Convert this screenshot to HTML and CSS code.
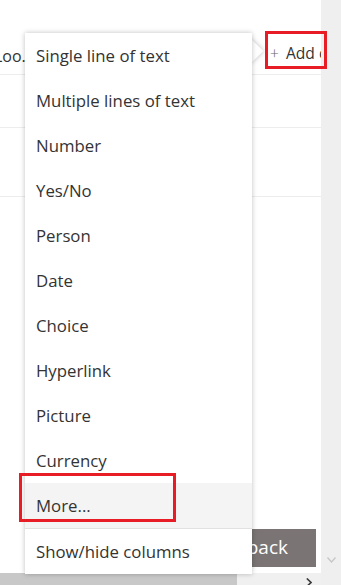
FILE: index.html
```html
<!DOCTYPE html>
<html lang="en">
<head>
    <meta charset="UTF-8">
    <meta name="viewport" content="width=device-width, initial-scale=1.0">
    <title>Add column</title>
    <link rel="stylesheet" href="styles.css">
</head>
<body>
    <div class="page">
        <div class="main">
            <div class="list">
                <div class="row header">
                    <span class="col-name">Loo...</span>
                    <span class="add-col"><span class="plus">+</span> Add c</span>
                </div>
                <div class="row row-2"></div>
                <div class="row row-3"></div>
                <div class="filler"></div>
                <div class="footer">
                    <button class="feedback">Feedback</button>
                </div>
            </div>
            <div class="hscroll">
                <div class="thumb"></div>
                <div class="track">
                    <svg class="arrow-right" width="6" height="9" viewBox="0 0 6 9"><path d="M0.8 0.5 L5 4.5 L0.8 8.5" fill="none" stroke="#3a3a3a" stroke-width="1.6"/></svg>
                </div>
            </div>
        </div>
        <div class="vscroll">
            <svg class="arrow-down" width="9" height="6" viewBox="0 0 9 6"><path d="M0.5 0.5 L4.5 5 L8.5 0.5" fill="none" stroke="#c6c6c6" stroke-width="1.3"/></svg>
        </div>
    </div>

    <!-- column type menu -->
    <div class="menu">
        <div class="beak"></div>
        <ul class="items">
            <li>Single line of text</li>
            <li>Multiple lines of text</li>
            <li>Number</li>
            <li>Yes/No</li>
            <li>Person</li>
            <li>Date</li>
            <li>Choice</li>
            <li>Hyperlink</li>
            <li>Picture</li>
            <li>Currency</li>
            <li class="hover">More...</li>
            <li class="divider"></li>
            <li>Show/hide columns</li>
        </ul>
    </div>

    <!-- annotation boxes -->
    <div class="mark mark-add"></div>
    <div class="mark mark-more"></div>
</body>
</html>
```

FILE: styles.css
```css
* {
    margin: 0;
    padding: 0;
    box-sizing: border-box;
    font-family: "Open Sans", "Noto Sans", sans-serif;
}

body {
    width: 341px;
    height: 585px;
    overflow: hidden;
    background: #fff;
    color: #333;
}

.page {
    display: flex;
    height: 585px;
}

.main {
    width: 321px;
    display: flex;
    flex-direction: column;
}

.list {
    flex: 1;
    display: flex;
    flex-direction: column;
    padding-top: 33px;
}

.row {
    border-bottom: 1px solid #ededed;
}

.header {
    height: 42px;
    display: flex;
    align-items: center;
    justify-content: space-between;
    padding-bottom: 2px;
}

.col-name {
    font-size: 16px;
    margin-left: -6px;
    margin-top: 6px;
    color: #333;
}

.add-col {
    font-size: 15.6px;
    white-space: nowrap;
    width: 51px;
    overflow: hidden;
    color: #333;
}

.plus {
    font-weight: 300;
    color: #666;
    margin-right: 3px;
}

.row-2 {
    height: 53px;
}

.row-3 {
    height: 69px;
}

.filler {
    flex: 1;
}

.footer {
    display: flex;
    justify-content: flex-end;
    padding-right: 5px;
    padding-bottom: 6px;
}

.feedback {
    height: 38px;
    width: 120px;
    border: none;
    background: #7a7574;
    color: #fff;
    font-size: 19px;
    text-align: right;
    padding-right: 28px;
    padding-bottom: 2px;
}

.hscroll {
    height: 12px;
    display: flex;
}

.thumb {
    width: 237px;
    background: #c8c8c8;
}

.track {
    flex: 1;
    background: #f0f0f0;
    display: flex;
    justify-content: flex-end;
    align-items: flex-end;
    padding-right: 9px;
}

.arrow-right {
    display: block;
    margin-bottom: -2px;
}

.vscroll {
    width: 20px;
    background: #efefef;
    display: flex;
    align-items: flex-end;
    justify-content: center;
    padding-bottom: 22px;
}

.menu {
    position: absolute;
    left: 25px;
    top: 33px;
    width: 227px;
}

.beak {
    position: absolute;
    right: -8px;
    top: 10px;
    width: 16px;
    height: 16px;
    background: #fff;
    transform: rotate(45deg);
    box-shadow: 0 0 5px rgba(0, 0, 0, 0.25);
}

.items {
    position: relative;
    list-style: none;
    background: #fff;
    box-shadow: 0 0 5px rgba(0, 0, 0, 0.25);
}

.items li {
    height: 45px;
    line-height: 46px;
    padding-left: 11px;
    font-size: 16.8px;
    color: #333;
    white-space: nowrap;
}

.items li.hover {
    background: #f4f4f4;
}

.items li.divider {
    height: 1px;
    background: #e1e1e1;
}

.mark {
    position: absolute;
    border: 3px solid #e81c24;
}

.mark-add {
    left: 265px;
    top: 31px;
    width: 62px;
    height: 38px;
}

.mark-more {
    left: 19px;
    top: 473px;
    width: 157px;
    height: 49px;
}
```
